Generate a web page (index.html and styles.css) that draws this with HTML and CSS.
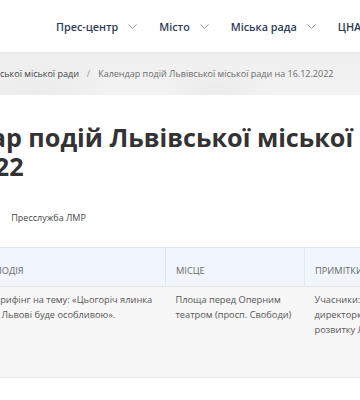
FILE: index.html
```html
<!DOCTYPE html>
<html lang="uk">
<head>
    <meta charset="UTF-8">
    <meta name="viewport" content="width=device-width, initial-scale=1.0">
    <title>Календар подій Львівської міської ради на 16.12.2022</title>
    <link rel="stylesheet" href="styles.css">
</head>
<body>
    <header class="topbar">
        <nav class="menu">
            <a class="menu-item" href="#">Прес-центр
                <svg class="chev" width="9" height="5" viewBox="0 0 9 5"><polyline points="0.5,0.5 4.5,4.5 8.5,0.5"/></svg>
            </a>
            <a class="menu-item" href="#">Місто
                <svg class="chev" width="9" height="5" viewBox="0 0 9 5"><polyline points="0.5,0.5 4.5,4.5 8.5,0.5"/></svg>
            </a>
            <a class="menu-item" href="#">Міська рада
                <svg class="chev" width="9" height="5" viewBox="0 0 9 5"><polyline points="0.5,0.5 4.5,4.5 8.5,0.5"/></svg>
            </a>
            <a class="menu-item" href="#">ЦНАП</a>
        </nav>
    </header>

    <div class="crumbs-band">
        <nav class="crumbs">
            <a href="#">Головна</a>
            <span class="sep">/</span>
            <a href="#">Календар подій Львівської міської ради</a>
            <span class="sep">/</span>
            <span class="current">Календар подій Львівської міської ради на 16.12.2022</span>
        </nav>
    </div>

    <main class="wrap">
        <h1 class="title">Календар подій Львівської міської ради на 16.12.2022</h1>

        <div class="meta">
            <span class="date">16 грудня 2022</span>
            <span class="author">Пресслужба ЛМР</span>
        </div>

        <table class="events">
            <colgroup>
                <col class="c-time">
                <col class="c-event">
                <col class="c-place">
                <col class="c-note">
            </colgroup>
            <thead>
                <tr>
                    <th>Час</th>
                    <th>Подія</th>
                    <th>Місце</th>
                    <th>Примітки</th>
                </tr>
            </thead>
            <tbody>
                <tr>
                    <td>11:00</td>
                    <td>Брифінг на тему: «Цьогоріч ялинка у Львові буде особливою».</td>
                    <td class="place">Площа перед Оперним театром (просп. Свободи)</td>
                    <td>Учасники:<br>директорка департаменту<br>розвитку Львівської міської ради</td>
                </tr>
            </tbody>
        </table>
    </main>
</body>
</html>
```

FILE: styles.css
```css
body {
    margin: 0;
    background: #fff;
    font-family: 'Open Sans', 'Noto Sans', sans-serif;
    color: #555;
    overflow: hidden;
}

a {
    color: inherit;
    text-decoration: none;
}

/* top menu */
.topbar {
    height: 52px;
    background: #fff;
    display: flex;
    align-items: center;
    padding-left: 56px;
    position: relative;
    z-index: 1;
    box-shadow: 0 1px 4px rgba(0, 0, 0, 0.06);
}

.menu {
    display: flex;
    align-items: center;
    gap: 22px;
    white-space: nowrap;
}

.menu-item {
    display: flex;
    align-items: center;
    gap: 10px;
    font-size: 10.8px;
    font-weight: 600;
    color: #2c3d55;
}

.chev {
    fill: none;
    stroke: #8d9bad;
    stroke-width: 1;
}

/* breadcrumbs */
.crumbs-band {
    height: 43px;
    display: flex;
    align-items: center;
    background:
        radial-gradient(ellipse 60px 30px at 60% 100%, rgba(0, 0, 0, 0.03), transparent),
        radial-gradient(ellipse 80px 40px at 10% 100%, rgba(0, 0, 0, 0.03), transparent),
        linear-gradient(#efefef, #f3f3f3);
    overflow: hidden;
}

.crumbs {
    display: flex;
    align-items: center;
    gap: 8px;
    margin-left: -151px;
    font-size: 9px;
    white-space: nowrap;
}

.crumbs a {
    color: #454545;
}

.crumbs .sep {
    color: #9a9a9a;
}

.crumbs .current {
    color: #6b6b6b;
}

/* content */
.wrap {
    margin-left: -92px;
    width: 600px;
}

.title {
    margin: 28px 0 0 -14px;
    font-size: 25.2px;
    line-height: 29px;
    font-weight: 700;
    color: #333;
}

.meta {
    display: flex;
    gap: 38px;
    margin-top: 29px;
    font-size: 9px;
    line-height: 15px;
    color: #444;
}

.events {
    margin-top: 22px;
    width: 100%;
    border-collapse: collapse;
    table-layout: fixed;
    font-size: 9.25px;
    line-height: 15px;
}

.c-time { width: 76px; }
.c-event { width: 181px; }
.c-place { width: 139px; }

.events th {
    padding: 15px 10px 8px;
    background: #f0f6fc;
    border-top: 1px solid #e1e7ee;
    border-bottom: 1px solid #dfe4ea;
    border-left: 1px solid #e1e7ee;
    text-align: left;
    font-weight: 400;
    text-transform: uppercase;
    color: #6a6a6a;
}

.events td {
    height: 85px;
    padding: 5px 10px 0;
    vertical-align: top;
    background: #f7f7f7;
    border-bottom: 1px solid #e6e6e6;
    color: #555;
}

.events td.place {
    padding-right: 4px;
}
```
